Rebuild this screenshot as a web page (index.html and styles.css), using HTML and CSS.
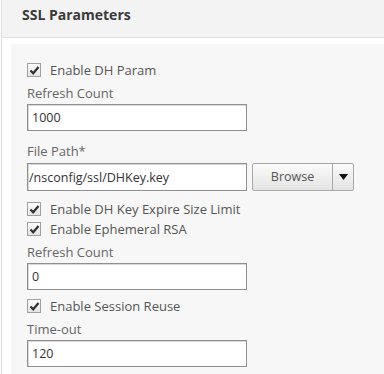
FILE: index.html
```html
<!DOCTYPE html>
<html lang="en">
<head>
    <meta charset="UTF-8">
    <title>SSL Parameters</title>
    <link rel="stylesheet" href="styles.css">
</head>
<body>
    <div class="section">
        <div class="section-head">SSL Parameters</div>
        <div class="section-body">
            <div class="panel">
                <div class="check"><span class="box"><svg width="11" height="11" viewBox="0 0 11 11"><path d="M1.5 5.5 L4.2 8.3 L9.5 2" fill="none" stroke="#333" stroke-width="2.2"/></svg></span>Enable DH Param</div>
                <div class="field">
                    <label>Refresh Count</label>
                    <input type="text" value="1000">
                </div>
                <div class="field wide">
                    <label>File Path*</label>
                    <div class="file-row">
                        <input type="text" value="/nsconfig/ssl/DHKey.key">
                        <div class="split-btn">
                            <span class="btn-main">Browse</span>
                            <span class="btn-arrow"><svg width="9" height="6" viewBox="0 0 9 6"><path d="M0 0 H9 L4.5 6 Z" fill="#111"/></svg></span>
                        </div>
                    </div>
                </div>
                <div class="check after-row"><span class="box"><svg width="11" height="11" viewBox="0 0 11 11"><path d="M1.5 5.5 L4.2 8.3 L9.5 2" fill="none" stroke="#333" stroke-width="2.2"/></svg></span>Enable DH Key Expire Size Limit</div>
                <div class="check"><span class="box"><svg width="11" height="11" viewBox="0 0 11 11"><path d="M1.5 5.5 L4.2 8.3 L9.5 2" fill="none" stroke="#333" stroke-width="2.2"/></svg></span>Enable Ephemeral RSA</div>
                <div class="field">
                    <label>Refresh Count</label>
                    <input type="text" value="0">
                </div>
                <div class="check after-input"><span class="box"><svg width="11" height="11" viewBox="0 0 11 11"><path d="M1.5 5.5 L4.2 8.3 L9.5 2" fill="none" stroke="#333" stroke-width="2.2"/></svg></span>Enable Session Reuse</div>
                <div class="field">
                    <label>Time-out</label>
                    <input type="text" value="120">
                </div>
            </div>
        </div>
    </div>
</body>
</html>
```

FILE: styles.css
```css
body {
    margin: 0;
    font-family: "Open Sans", "Noto Sans", sans-serif;
    background-color: #fff;
    color: #555;
}
.section {
    margin-left: 1px;
    border-left: 1px solid #dedede;
}
.section-head {
    height: 37px;
    padding-left: 20px;
    line-height: 30px;
    font-size: 14px;
    font-weight: bold;
    color: #3a3a3a;
    background-color: #f3f3f3;
    border-bottom: 1px solid #e0e0e0;
}
.section-body {
    padding: 6px 0 0 9px;
}
.panel {
    padding: 16px 16px 20px 16px;
    background-color: #f7f7f7;
}
.check {
    display: flex;
    align-items: center;
    height: 20px;
    font-size: 13px;
    color: #555;
}
.check.after-row {
    margin-top: 8px;
}
.check.after-input {
    margin-top: 6px;
}
.box {
    display: flex;
    align-items: center;
    justify-content: center;
    width: 12px;
    height: 12px;
    margin-right: 9px;
    border: 1px solid #a0a0a0;
    background: linear-gradient(#fdfdfd, #e4e4e4);
}
.field {
    margin-top: 5px;
}
.field.wide {
    margin-top: 12px;
}
.field label {
    display: block;
    font-size: 13px;
    line-height: 16px;
    margin-bottom: 3px;
    color: #666;
}
.field.wide label {
    margin-bottom: 4px;
}
input[type="text"] {
    box-sizing: border-box;
    width: 220px;
    height: 27px;
    margin: 0;
    padding: 0 4px;
    font-family: "Open Sans", "Noto Sans", sans-serif;
    font-size: 12.5px;
    color: #333;
    background-color: #fff;
    border: 1px solid #8f8f8f;
    box-shadow: inset 1px 1px 0 #d8d8d8;
    outline: none;
}
.file-row {
    display: flex;
    gap: 5px;
}
.file-row input[type="text"] {
    height: 28px;
    padding-left: 1px;
}
.split-btn {
    display: flex;
    height: 28px;
    box-sizing: border-box;
    border: 1px solid #a8a8a8;
    border-radius: 2px;
    background: linear-gradient(#fbfbfb, #e3e3e3);
}
.btn-main {
    width: 79px;
    line-height: 26px;
    text-align: center;
    font-size: 12.5px;
    color: #555;
    border-right: 1px solid #a8a8a8;
}
.btn-arrow {
    display: flex;
    align-items: center;
    justify-content: center;
    width: 20px;
}
```
